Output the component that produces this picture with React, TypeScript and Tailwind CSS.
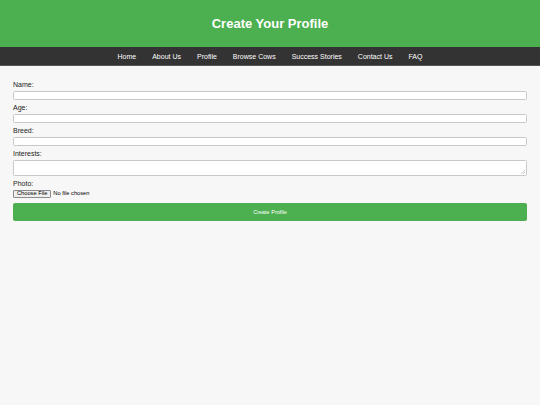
import React from 'react';

const links = ['Home', 'About Us', 'Profile', 'Browse Cows', 'Success Stories', 'Contact Us', 'FAQ'];

function Field({ label, tall }: { label: string; tall?: boolean }) {
  return (
    <div className="flex flex-col">
      <label className="h-[8px] text-[7px] leading-[8px] text-[#222]">{label}</label>
      <div
        className={`relative mt-[2px] mb-[4px] w-full rounded-[1.5px] border border-[#c8c8c8] bg-white ${
          tall ? 'h-[16px]' : 'h-[9px]'
        }`}
      >
        {tall && (
          <svg className="absolute right-[1px] bottom-[1px]" width="4" height="4" viewBox="0 0 4 4">
            <path d="M4 0 L0 4 M4 2 L2 4" stroke="#999" strokeWidth="0.5" />
          </svg>
        )}
      </div>
    </div>
  );
}

export default function App() {
  return (
    <div className="min-h-screen w-full bg-[#f7f7f7] font-['Liberation_Sans',Arial,sans-serif]">
      <header className="flex h-[47px] items-center justify-center bg-[#4caf50]">
        <h1 className="text-[13px] font-bold text-white">Create Your Profile</h1>
      </header>

      <nav className="flex h-[19px] items-center justify-center gap-[16px] bg-[#333] border-b border-[#555]">
        {links.map((l) => (
          <a key={l} href="#" className="text-[7px] leading-none text-white">
            {l}
          </a>
        ))}
      </nav>

      <main className="px-[13px] pt-[15px]">
        <Field label="Name:" />
        <Field label="Age:" />
        <Field label="Breed:" />
        <Field label="Interests:" tall />

        <label className="block h-[8px] text-[7px] leading-[8px] text-[#222]">Photo:</label>
        <div className="mt-[2px] flex h-[8px] items-center gap-[2px]">
          <span className="flex h-[8px] items-center rounded-[1px] border border-[#8a8a8a] bg-[#efefef] px-[3px] text-[5.7px] leading-none text-black">
            Choose File
          </span>
          <span className="text-[5.7px] leading-none text-black">No file chosen</span>
        </div>

        <button className="mt-[5px] flex h-[18px] w-full items-center justify-center rounded-[2px] bg-[#4caf50] text-[5.5px] text-white">
          Create Profile
        </button>
      </main>
    </div>
  );
}
